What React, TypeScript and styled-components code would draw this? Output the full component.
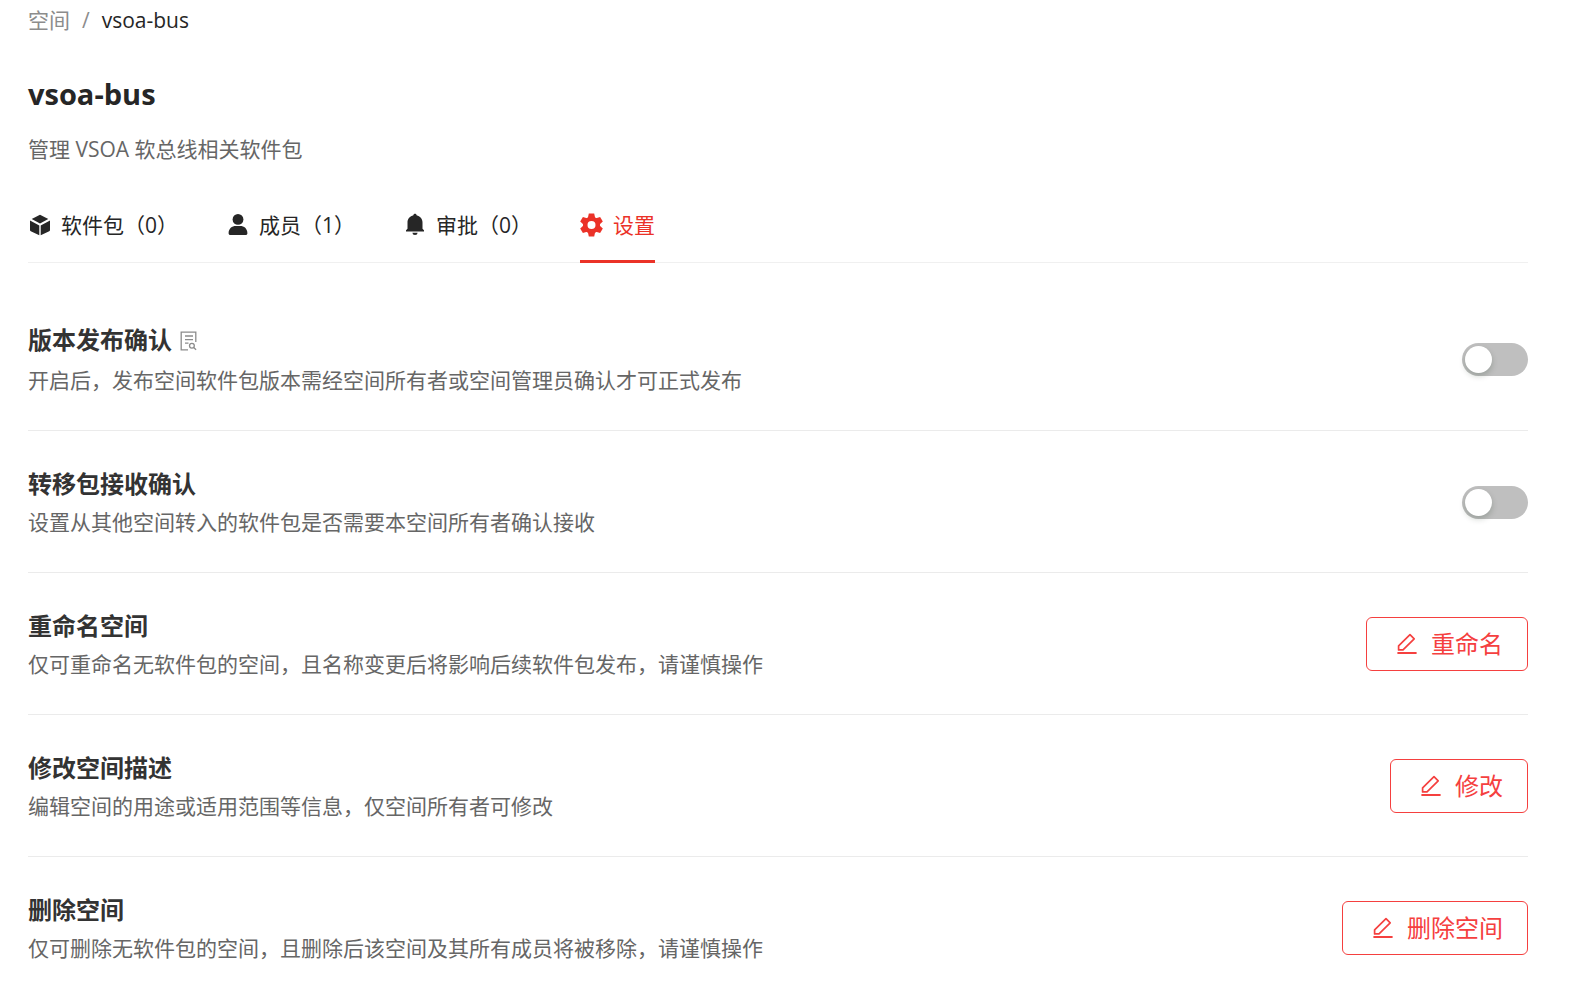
import React from "react";
import styled, { createGlobalStyle } from "styled-components";

const GlobalStyle = createGlobalStyle`
  * { box-sizing: border-box; }
  body {
    margin: 0;
    background: #fff;
    color: #262626;
    font-family: "Open Sans", "Noto Sans CJK SC", sans-serif;
    font-size: 21px;
    line-height: 32px;
  }
`;

const Page = styled.main`
  padding: 4px 50px 0 28px;
`;

const Breadcrumb = styled.nav`
  display: flex;
  gap: 12px;
  color: #8c8c8c;
`;

const Crumb = styled.a`
  color: ${(p) => (p["aria-current"] ? "#262626" : "#8c8c8c")};
  text-decoration: none;
`;

const SpaceName = styled.h1`
  margin: 37px 0 0;
  font-size: 29px;
  line-height: 42px;
  font-weight: 700;
`;

const SpaceSummary = styled.p`
  margin: 18px 0 0;
  color: #666;
`;

const Tabs = styled.div`
  display: flex;
  gap: 48px;
  margin-top: 24px;
  border-bottom: 1px solid #f0f0f0;
`;

const Tab = styled.button<{ $active?: boolean }>`
  display: flex;
  align-items: center;
  gap: 9px;
  height: 74px;
  margin-bottom: -1px;
  padding: 1px 0 0;
  border: 0;
  border-bottom: 3px solid ${(p) => (p.$active ? "#eb3228" : "transparent")};
  background: none;
  color: ${(p) => (p.$active ? "#eb3228" : "#262626")};
  font: inherit;
  white-space: nowrap;
  cursor: pointer;
`;

const Settings = styled.section`
  padding-top: 24px;
`;

const Row = styled.div`
  display: flex;
  align-items: center;
  justify-content: space-between;
  gap: 24px;
  padding: 35px 0 34px;
  border-bottom: 1px solid #ebebeb;

  &:last-child {
    border-bottom: 0;
  }
`;

const RowHead = styled.div`
  display: flex;
  align-items: flex-start;
  gap: 8px;
  margin-bottom: 4px;
`;

const RowTitle = styled.h2`
  margin: 0;
  color: #333;
  font-size: 24px;
  line-height: 36px;
  font-weight: 700;
`;

const RowText = styled.p`
  margin: 0;
  color: #666;
`;

const DocLink = styled.a`
  display: flex;
  align-items: center;
  height: 38px;
  color: #8c8c8c;
`;

const Switch = styled.input`
  appearance: none;
  flex: none;
  width: 66px;
  height: 33px;
  margin: 0;
  padding: 3px;
  border-radius: 17px;
  background: #bfbfbf;
  cursor: pointer;

  &::before {
    content: "";
    display: block;
    width: 27px;
    height: 27px;
    border-radius: 50%;
    background: #fff;
    box-shadow: 0 3px 6px rgba(0, 35, 11, 0.2);
  }

  &:checked {
    background: #eb3228;
  }

  &:checked::before {
    margin-left: auto;
  }
`;

const ActionButton = styled.button`
  display: flex;
  flex: none;
  align-items: center;
  gap: 14px;
  height: 54px;
  padding: 0 24px 0 30px;
  border: 1px solid #f5403f;
  border-radius: 6px;
  background: #fff;
  color: #f5403f;
  font: inherit;
  font-size: 24px;
  cursor: pointer;
`;

const CubeIcon = () => (
  <svg width="24" height="24" viewBox="0 0 24 24" fill="currentColor" aria-hidden="true">
    <path d="M12 1.800 20.300 6 12 10.600 3.700 6Z" />
    <path d="M2 7.600 11.300 12.400v9.800L2.800 18.200a1.400 1.400 0 0 1-.8-1.300Z" />
    <path d="M22 7.600 12.700 12.400v9.800l8.500-4a1.400 1.400 0 0 0 .8-1.300Z" />
  </svg>
);

const UserIcon = () => (
  <svg width="24" height="24" viewBox="0 0 24 24" fill="currentColor" aria-hidden="true">
    <circle cx="12" cy="6.400" r="5.400" />
    <path d="M2.600 20.200c0-4.600 3.300-7.200 7.200-7.200h4.400c3.900 0 7.200 2.600 7.200 7.200 0 1.200-.7 1.800-1.900 1.800h-15c-1.200 0-1.900-.6-1.900-1.800Z" />
  </svg>
);

const BellIcon = () => (
  <svg width="24" height="24" viewBox="0 0 24 24" fill="currentColor" aria-hidden="true">
    <path d="M12 .8c.9 0 1.500.6 1.600 1.400 3.400.8 5.900 3.500 5.900 7.200v6.400l1.500 1.500v1.300H3v-1.300l1.500-1.500V9.400c0-3.700 2.500-6.400 5.900-7.200C10.500 1.400 11.100.8 12 .8Z" />
    <path d="M9.400 19.800h5.200a2.600 2.200 0 0 1-5.200 0Z" />
  </svg>
);

const GearIcon = () => (
  <svg width="24" height="24" viewBox="0 0 24 24" fill="currentColor" aria-hidden="true">
    <circle cx="11.500" cy="12" r="6.300" fill="none" stroke="currentColor" strokeWidth="4.600" />
    {[0, 60, 120, 180, 240, 300].map((angle) => (
      <path key={angle} d="M8.800.5h5.400l1.300 6h-8Z" transform={`rotate(${angle} 11.500 12)`} />
    ))}
  </svg>
);

const DocIcon = () => (
  <svg width="18" height="20" viewBox="0 0 18 20" fill="none" stroke="currentColor" strokeWidth="1.300" aria-hidden="true">
    <path d="M8 18.800H1.200V1.200h14.600V11M5 5h8M5 8.600h8M5 12.200h3.500" />
    <circle cx="11.900" cy="14.800" r="2.400" />
    <path d="m13.700 16.600 2.400 2.200" />
  </svg>
);

const EditIcon = () => (
  <svg width="20" height="22" viewBox="0 0 20 22" fill="none" stroke="currentColor" strokeWidth="1.700" strokeLinejoin="round" aria-hidden="true">
    <path d="M1.600 12.800 13 1.700l4.200 4.100L6 16.900H1.600Z" />
    <path d="M.4 20h19.200" strokeWidth="2" />
  </svg>
);

const tabs = [
  { icon: <CubeIcon />, label: "软件包（0）" },
  { icon: <UserIcon />, label: "成员（1）" },
  { icon: <BellIcon />, label: "审批（0）" },
  { icon: <GearIcon />, label: "设置", active: true },
];

type Setting = {
  id: string;
  title: string;
  text: string;
  action?: string;
  doc?: boolean;
};

const settings: Setting[] = [
  { id: "publish", title: "版本发布确认", text: "开启后，发布空间软件包版本需经空间所有者或空间管理员确认才可正式发布", doc: true },
  { id: "transfer", title: "转移包接收确认", text: "设置从其他空间转入的软件包是否需要本空间所有者确认接收" },
  { id: "rename", title: "重命名空间", text: "仅可重命名无软件包的空间，且名称变更后将影响后续软件包发布，请谨慎操作", action: "重命名" },
  { id: "describe", title: "修改空间描述", text: "编辑空间的用途或适用范围等信息，仅空间所有者可修改", action: "修改" },
  { id: "remove", title: "删除空间", text: "仅可删除无软件包的空间，且删除后该空间及其所有成员将被移除，请谨慎操作", action: "删除空间" },
];

export default function App() {
  return (
    <Page lang="zh-CN">
      <GlobalStyle />
      <Breadcrumb>
        <Crumb href="#spaces">空间</Crumb>
        <span>/</span>
        <Crumb href="#vsoa-bus" aria-current="page">vsoa-bus</Crumb>
      </Breadcrumb>
      <SpaceName>vsoa-bus</SpaceName>
      <SpaceSummary>管理 VSOA 软总线相关软件包</SpaceSummary>
      <Tabs role="tablist">
        {tabs.map((tab) => (
          <Tab key={tab.label} type="button" role="tab" aria-selected={!!tab.active} $active={tab.active}>
            {tab.icon}
            <span>{tab.label}</span>
          </Tab>
        ))}
      </Tabs>
      <Settings>
        {settings.map((item) => (
          <Row key={item.id}>
            <div>
              <RowHead>
                <RowTitle id={item.id}>{item.title}</RowTitle>
                {item.doc && (
                  <DocLink href="#docs" aria-labelledby={item.id}>
                    <DocIcon />
                  </DocLink>
                )}
              </RowHead>
              <RowText>{item.text}</RowText>
            </div>
            {item.action ? (
              <ActionButton type="button">
                <EditIcon />
                {item.action}
              </ActionButton>
            ) : (
              <Switch type="checkbox" role="switch" aria-labelledby={item.id} />
            )}
          </Row>
        ))}
      </Settings>
    </Page>
  );
}
